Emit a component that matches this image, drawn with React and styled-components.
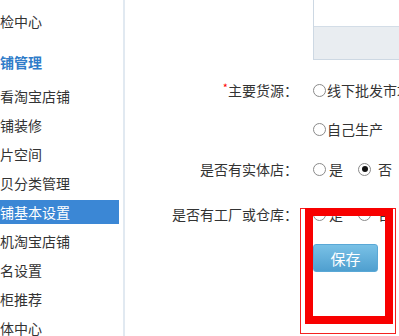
import React from "react";
import styled, { createGlobalStyle } from "styled-components";

const GlobalStyle = createGlobalStyle`
  html, body {
    margin: 0;
    padding: 0;
    background: #fff;
    overflow: hidden;
  }
  body {
    font-family: "Noto Sans CJK SC", "Noto Sans", sans-serif;
    color: #333;
  }
`;

const Page = styled.div`
  display: flex;
  width: 399px;
  height: 336px;
  overflow: hidden;
`;

const Sidebar = styled.div`
  width: 123px;
  flex: none;
  border-right: 2px solid #e1e9f1;
  padding-top: 9px;
  font-size: 14px;
`;

const NavItem = styled.div`
  width: 119px;
  height: 24px;
  line-height: 24px;
  margin-bottom: 5px;
  white-space: nowrap;
  overflow: hidden;
  color: ${(p) => (p.active ? "#fff" : "#333")};
  background: ${(p) => (p.active ? "#3b87d5" : "transparent")};
`;

const NavHeading = styled.div`
  height: 24px;
  line-height: 24px;
  margin: 17px 0 10px;
  font-weight: bold;
  color: #2f7cc9;
  white-space: nowrap;
`;

const Main = styled.div`
  position: relative;
  flex: 1;
  overflow: hidden;
  font-size: 14px;
`;

const Form = styled.div`
  display: grid;
  grid-template-columns: 173px 1fr;
  column-gap: 15px;
  align-items: start;
`;

const Label = styled.div`
  text-align: right;
  line-height: 20px;
  white-space: nowrap;
  margin-top: ${(p) => p.top || 0}px;
  color: #333;
`;

const Star = styled.span`
  color: #f00;
  font-size: 11px;
  vertical-align: top;
  line-height: 14px;
`;

const Value = styled.div`
  display: flex;
  flex-direction: column;
  gap: 19px;
  margin-top: ${(p) => p.top || 0}px;
  white-space: nowrap;
`;

const TextBox = styled.div`
  width: 120px;
  height: 60px;
  box-sizing: border-box;
  border: 1px solid #cdd8e3;
  border-top: none;
  display: flex;
  flex-direction: column;
`;

const TextBoxTop = styled.div`
  height: 26px;
  background: #fff;
  border-bottom: 1px solid #d3dde7;
`;

const TextBoxBar = styled.div`
  flex: 1;
  background: #e9edf1;
`;

const Options = styled.div`
  display: flex;
  align-items: center;
  line-height: 20px;
  gap: ${(p) => p.gap || 0}px;
`;

const Option = styled.label`
  display: flex;
  align-items: center;
  gap: ${(p) => p.gap || 1}px;
`;

const Radio = styled.span`
  width: 11px;
  height: 11px;
  border: 1px solid #8a8a8a;
  border-radius: 50%;
  display: flex;
  align-items: center;
  justify-content: center;
  background: #fff;
  flex: none;

  &::after {
    content: "";
    width: 6px;
    height: 6px;
    border-radius: 50%;
    background: ${(p) => (p.checked ? "#111" : "transparent")};
  }
`;

const SaveButton = styled.button`
  width: 65px;
  height: 28px;
  margin-top: ${(p) => p.top || 0}px;
  border: 1px solid #5aa8d6;
  border-radius: 3px;
  background: linear-gradient(#79c1e6, #4f9fcf);
  color: #fff;
  font-family: "Noto Sans CJK SC", sans-serif;
  font-size: 15px;
  padding: 0;
`;

const ThickMark = styled.div`
  position: absolute;
  left: 180px;
  top: 208px;
  width: 88px;
  height: 116px;
  box-sizing: border-box;
  border: 8px solid #f80000;
`;

const ThinMark = styled.div`
  position: absolute;
  left: 175px;
  top: 208px;
  width: 96px;
  height: 126px;
  box-sizing: border-box;
  border: 1px solid #f42020;
`;

const navItems = ["看淘宝店铺", "铺装修", "片空间", "贝分类管理", "铺基本设置", "机淘宝店铺", "名设置", "柜推荐", "体中心"];

export default function App() {
  return (
    <Page>
      <GlobalStyle />
      <Sidebar>
        <NavItem>检中心</NavItem>
        <NavHeading>铺管理</NavHeading>
        {navItems.map((item) => (
          <NavItem key={item} active={item === "铺基本设置"}>
            {item}
          </NavItem>
        ))}
      </Sidebar>
      <Main>
        <Form>
          <div />
          <TextBox>
            <TextBoxTop />
            <TextBoxBar />
          </TextBox>

          <Label top={20}>
            <Star>*</Star>主要货源：
          </Label>
          <Value top={20}>
            <Option>
              <Radio />
              线下批发市场
            </Option>
            <Option>
              <Radio />
              自己生产
            </Option>
          </Value>

          <Label top={20}>是否有实体店：</Label>
          <Value top={20}>
            <Options gap={15}>
              <Option gap={3}>
                <Radio />是
              </Option>
              <Option gap={7}>
                <Radio checked />否
              </Option>
            </Options>
          </Value>

          <Label top={25}>是否有工厂或仓库：</Label>
          <Value top={25}>
            <Options gap={15}>
              <Option gap={3}>
                <Radio />是
              </Option>
              <Option gap={7}>
                <Radio />否
              </Option>
            </Options>
          </Value>

          <div />
          <SaveButton top={20}>保存</SaveButton>
        </Form>
        <ThinMark />
        <ThickMark />
      </Main>
    </Page>
  );
}
